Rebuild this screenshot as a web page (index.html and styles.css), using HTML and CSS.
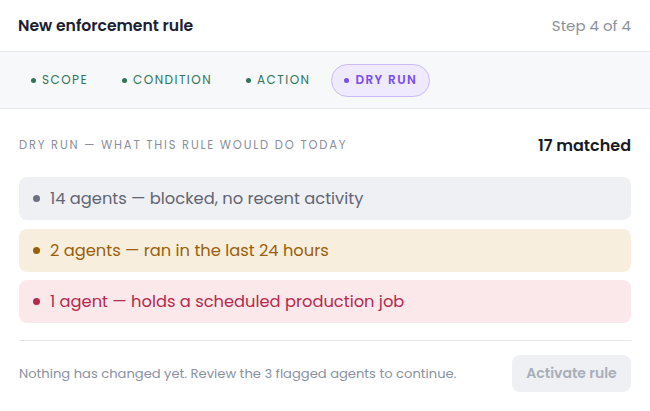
FILE: index.html
```html
<!DOCTYPE html>
<html lang="en">
  <head>
    <meta charset="UTF-8" />
    <meta name="viewport" content="width=device-width, initial-scale=1.0" />
    <title>New enforcement rule</title>
    <link rel="stylesheet" href="styles.css">
  </head>
  <body>
    <div class="panel">
      <header class="panel-head">
        <h1>New enforcement rule</h1>
        <span class="step">Step 4 of 4</span>
      </header>

      <nav class="steps">
        <span class="tab done"><i class="dot"></i>Scope</span>
        <span class="tab done"><i class="dot"></i>Condition</span>
        <span class="tab done"><i class="dot"></i>Action</span>
        <span class="tab active"><i class="dot"></i>Dry run</span>
      </nav>

      <section class="dry-run">
        <div class="dry-head">
          <span class="dry-label">Dry run — what this rule would do today</span>
          <span class="matched">17 matched</span>
        </div>
        <ul class="results">
          <li class="result neutral"><i class="dot"></i>14 agents — blocked, no recent activity</li>
          <li class="result warn"><i class="dot"></i>2 agents — ran in the last 24 hours</li>
          <li class="result danger"><i class="dot"></i>1 agent — holds a scheduled production job</li>
        </ul>
      </section>

      <footer class="panel-foot">
        <p>Nothing has changed yet. Review the 3 flagged agents to continue.</p>
        <button class="activate" disabled>Activate rule</button>
      </footer>
    </div>
  </body>
</html>
```

FILE: styles.css
```css
* {
  margin: 0;
  padding: 0;
  box-sizing: border-box;
}
body {
  background-color: #fff;
  color: #1f2430;
  font-family: Poppins, "Open Sans", "Noto Sans", sans-serif;
}
.panel {
  width: 650px;
  height: 411px;
}
.panel-head {
  height: 52px;
  padding: 0 19px 0 18px;
  display: flex;
  align-items: center;
  justify-content: space-between;
  border-bottom: 1px solid #e4e6ea;
}
.panel-head h1 {
  font-size: 15.6px;
  font-weight: 600;
  color: #1b2130;
}
.step {
  font-size: 15px;
  color: #8c929c;
}
.steps {
  height: 57px;
  padding: 0 18px;
  display: flex;
  align-items: center;
  gap: 8px;
  background-color: #f7f8fa;
  border-bottom: 1px solid #e4e6ea;
}
.tab {
  display: flex;
  align-items: center;
  gap: 6px;
  height: 33px;
  padding: 0 12px;
  font-size: 12px;
  letter-spacing: 1.45px;
  text-transform: uppercase;
  color: #2e7559;
  border-radius: 17px;
  border: 1px solid transparent;
}
.tab .dot {
  width: 5px;
  height: 5px;
  border-radius: 50%;
  background-color: #2e7559;
}
.tab.active {
  background-color: #efeafd;
  border-color: #c9b9f6;
  color: #7a4fe6;
  font-weight: 600;
}
.tab.active .dot {
  background-color: #7a4fe6;
}
.dry-run {
  margin: 0 19px;
  padding: 24px 0 17px;
  border-bottom: 1px solid #e4e6ea;
}
.dry-head {
  display: flex;
  align-items: center;
  justify-content: space-between;
  margin-bottom: 19px;
}
.dry-label {
  font-size: 11.5px;
  letter-spacing: 1.8px;
  text-transform: uppercase;
  color: #8a909b;
}
.matched {
  font-size: 16px;
  font-weight: 600;
  color: #161b26;
}
.results {
  list-style: none;
  display: flex;
  flex-direction: column;
  gap: 8.5px;
}
.result {
  height: 43px;
  padding: 0 14px;
  display: flex;
  align-items: center;
  gap: 10px;
  border-radius: 8px;
  font-size: 16.3px;
}
.result .dot {
  width: 7px;
  height: 7px;
  border-radius: 50%;
}
.result.neutral {
  background-color: #eff0f3;
  color: #5f6574;
}
.result.neutral .dot {
  background-color: #6b7180;
}
.result.warn {
  background-color: #f8eedd;
  color: #9a5f0b;
}
.result.warn .dot {
  background-color: #9a5f0b;
}
.result.danger {
  background-color: #fbe8eb;
  color: #b52a4c;
}
.result.danger .dot {
  background-color: #b52a4c;
}
.panel-foot {
  display: flex;
  align-items: center;
  justify-content: space-between;
  padding: 14px 19px 0 19px;
}
.panel-foot p {
  font-size: 13.1px;
  color: #8a91a0;
}
.activate {
  width: 119px;
  height: 37px;
  border: none;
  border-radius: 8px;
  background-color: #eef0f3;
  color: #a9afb9;
  font-family: inherit;
  font-size: 14px;
  font-weight: 600;
}
```
